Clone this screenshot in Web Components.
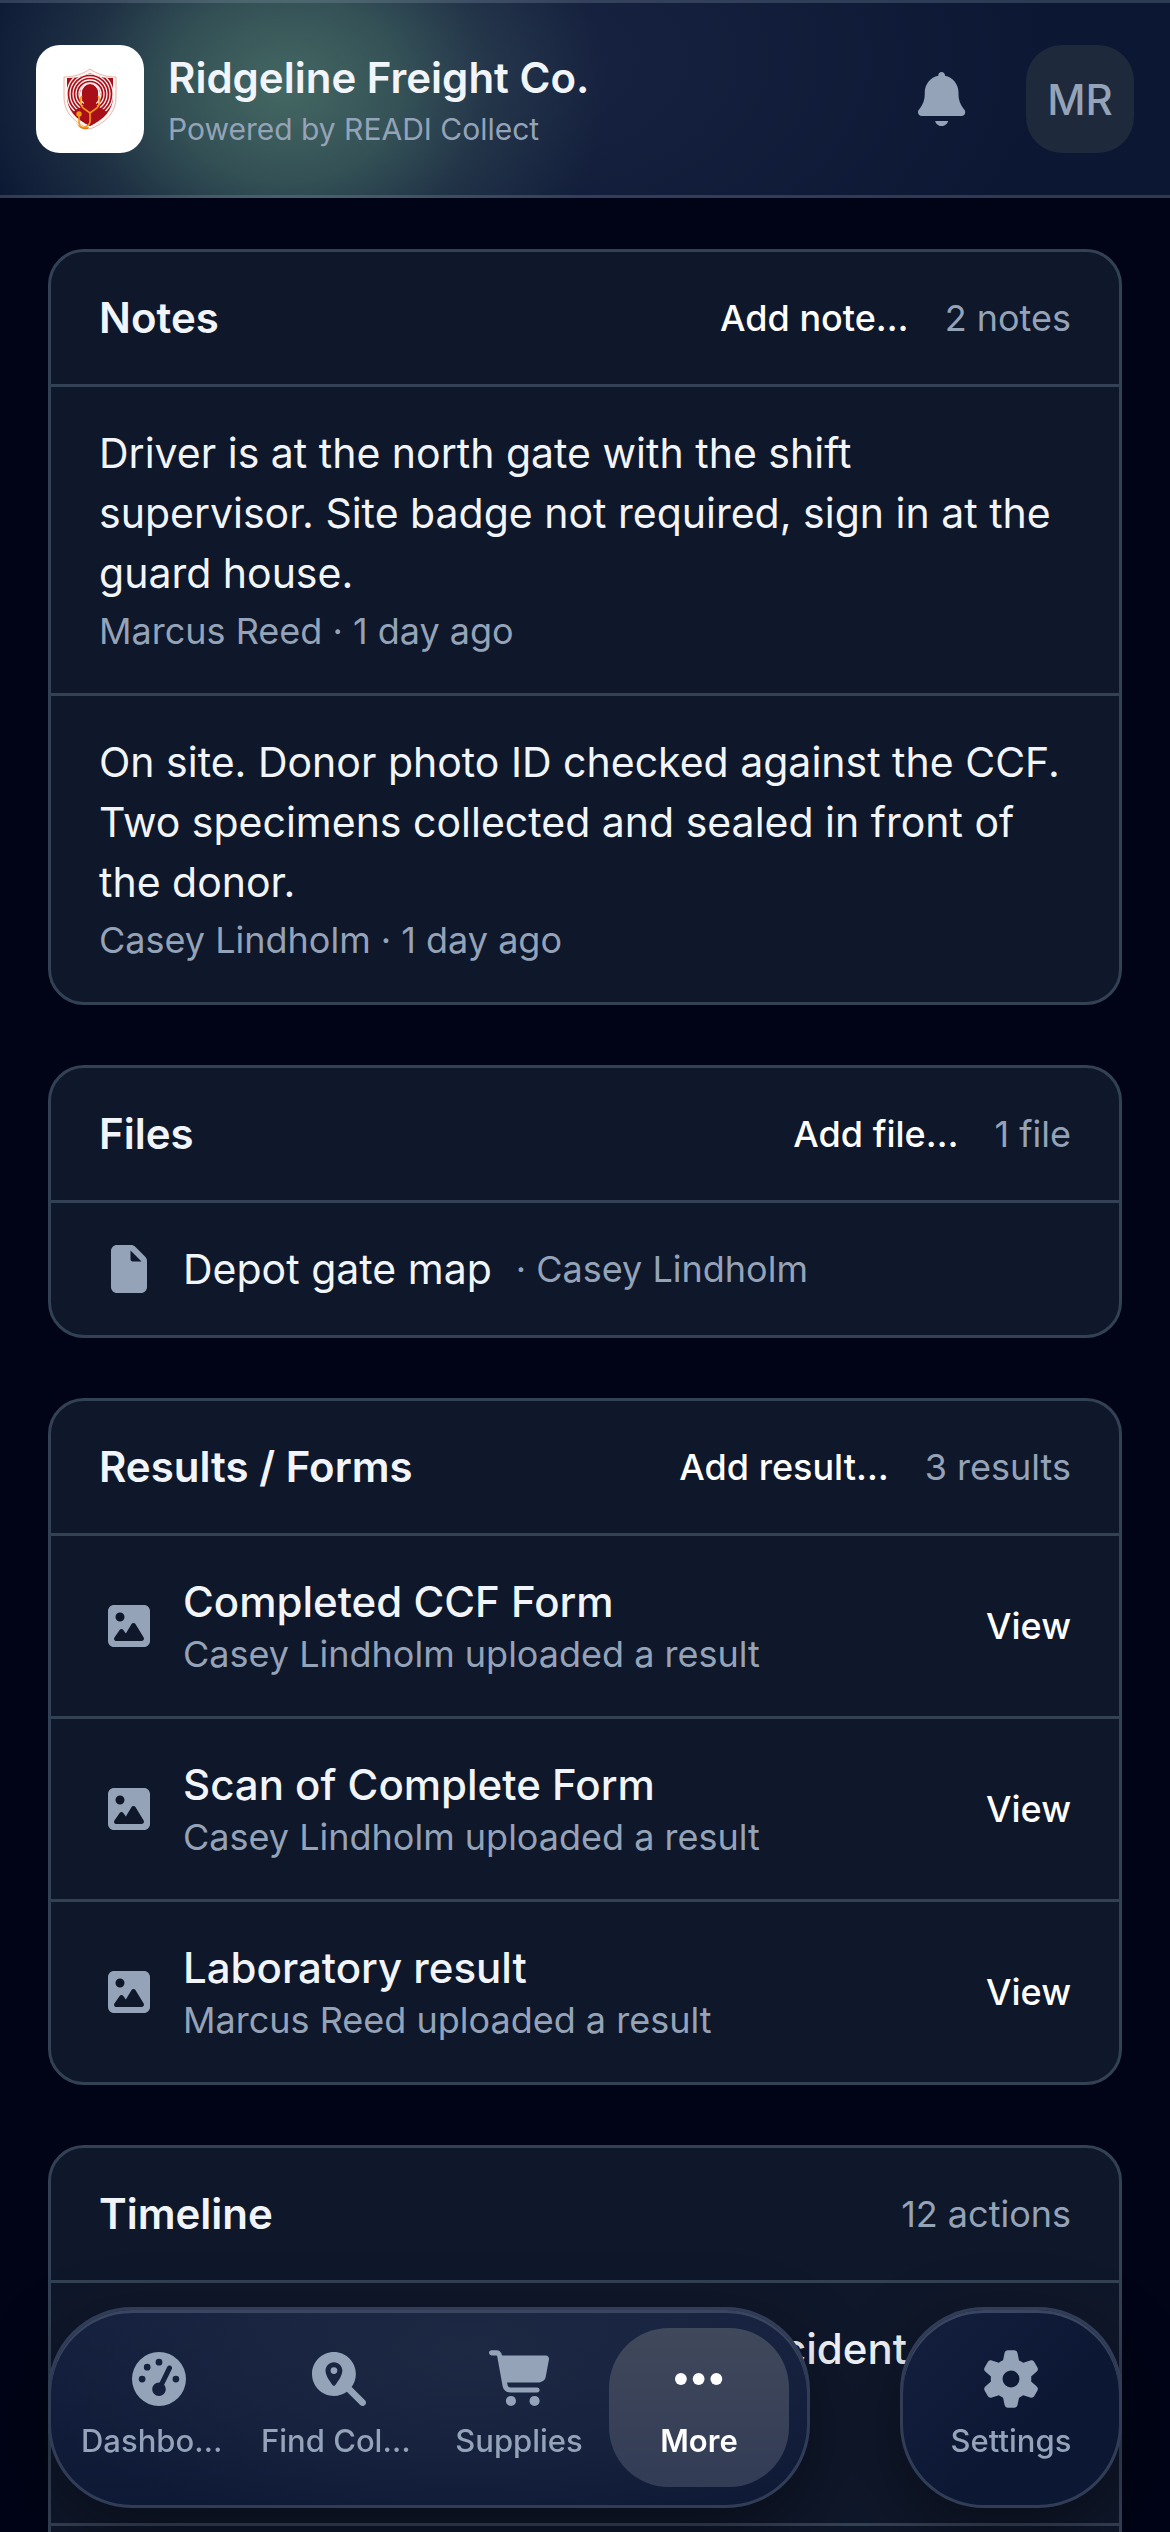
<!DOCTYPE html>
<html lang="en">
<head>
<meta charset="utf-8">
<meta name="viewport" content="width=device-width, initial-scale=1">
<title>Ridgeline Freight Co.</title>
<style>
  :root {
    --page: #010416;
    --card: #0f172a;
    --line: #334155;
    --text: #f1f5f9;
    --strong: #ffffff;
    --muted: #94a3b8;
    --chip: #1e293b;
    --size-title: 42px;
    --size-body: 41px;
    --size-meta: 36px;
    --size-label: 31px;
    --size-small: 30px;
  }
  body {
    margin: 0;
    background: var(--page);
    color: var(--text);
    font-family: Inter, "Liberation Sans", sans-serif;
  }
</style>
</head>
<body>
<app-shell>
  <app-header slot="header" name="Ridgeline Freight Co." tagline="Powered by READI Collect" initials="MR"></app-header>

  <list-card heading="Notes" action="Add note…" count="2 notes">
    <note-item meta="Marcus Reed · 1 day ago">Driver is at the north gate with the shift supervisor. Site badge not required, sign in at the guard house.</note-item>
    <note-item meta="Casey Lindholm · 1 day ago">On site. Donor photo ID checked against the CCF. Two specimens collected and sealed in front of the donor.</note-item>
  </list-card>

  <list-card heading="Files" action="Add file…" count="1 file">
    <file-item by="· Casey Lindholm">Depot gate map</file-item>
  </list-card>

  <list-card heading="Results / Forms" action="Add result…" count="3 results">
    <result-item meta="Casey Lindholm uploaded a result">Completed CCF Form</result-item>
    <result-item meta="Casey Lindholm uploaded a result">Scan of Complete Form</result-item>
    <result-item meta="Marcus Reed uploaded a result">Laboratory result</result-item>
  </list-card>

  <list-card heading="Timeline" count="12 actions">
    <timeline-item>Accident</timeline-item>
    <timeline-item></timeline-item>
  </list-card>

  <nav-dock slot="dock">
    <nav-pill>
      <nav-tab icon="gauge" label="Dashbo…" truncated></nav-tab>
      <nav-tab icon="find" label="Find Col…" truncated></nav-tab>
      <nav-tab icon="cart" label="Supplies"></nav-tab>
      <nav-tab icon="dots" label="More" active></nav-tab>
    </nav-pill>
    <nav-pill compact>
      <nav-tab icon="gear" label="Settings"></nav-tab>
    </nav-pill>
  </nav-dock>
</app-shell>

<script>
const ICONS = {
  bell: ['448', '<path d="M224 0c-17.7 0-32 14.3-32 32l0 3.2C119 50 64 114.6 64 192l0 21.7c0 48.1-16.4 94.8-46.4 132.4L7.8 358.3C2.7 364.6 0 372.4 0 380.5 0 400.1 15.9 416 35.5 416l376.9 0c19.6 0 35.5-15.9 35.5-35.5 0-8.1-2.7-15.9-7.8-22.2l-9.8-12.2C400.4 308.5 384 261.8 384 213.7l0-21.7c0-77.4-55-142-128-156.8l0-3.2c0-17.7-14.3-32-32-32zM162 464c7.1 27.6 32.2 48 62 48s54.9-20.4 62-48l-124 0z"/>'],
  file: ['384', '<path d="M0 64C0 28.7 28.7 0 64 0L213.5 0c17 0 33.3 6.7 45.3 18.7L365.3 125.3c12 12 18.7 28.3 18.7 45.3L384 448c0 35.3-28.7 64-64 64L64 512c-35.3 0-64-28.7-64-64L0 64zm208-5.5l0 93.5c0 13.3 10.7 24 24 24L325.5 176 208 58.5z"/>'],
  image: ['448', '<path d="M64 32C28.7 32 0 60.7 0 96L0 416c0 35.3 28.7 64 64 64l320 0c35.3 0 64-28.7 64-64l0-320c0-35.3-28.7-64-64-64L64 32zm64 80a48 48 0 1 1 0 96 48 48 0 1 1 0-96zM272 224c8.4 0 16.1 4.4 20.5 11.5l88 144c4.5 7.4 4.7 16.7 .5 24.3S368.7 416 360 416L88 416c-8.9 0-17.2-5-21.3-12.9s-3.5-17.5 1.6-24.8l56-80c4.5-6.4 11.8-10.2 19.7-10.2s15.2 3.8 19.7 10.2l26.4 37.8 61.4-100.5c4.4-7.1 12.1-11.5 20.5-11.5z"/>'],
  gauge: ['512', '<path fill-rule="evenodd" d="M0 256a256 256 0 1 1 512 0 256 256 0 1 1 -512 0zM320 352c0-16-6-31-15.500-42L377.800 161.600c5.800-11.900 .9-26.300-11-32.100s-26.300-.9-32.100 11L262 288.300c-2-.2-4-.3-6-.3-35.300 0-64 28.700-64 64s28.700 64 64 64 64-28.700 64-64zM144 176a32 32 0 1 0 0-64 32 32 0 1 0 0 64zM128 256a32 32 0 1 0 -64 0 32 32 0 1 0 64 0zM416 288a32 32 0 1 0 0-64 32 32 0 1 0 0 64zM288 96a32 32 0 1 0 -64 0 32 32 0 1 0 64 0z"/>'],
  find: ['512', '<path fill-rule="evenodd" d="M416 208c0 45.900-14.900 88.300-40 122.700L502.600 457.400c12.500 12.500 12.500 32.800 0 45.300s-32.800 12.500-45.300 0L330.700 376C296.300 401.100 253.900 416 208 416 93.100 416 0 322.900 0 208S93.100 0 208 0 416 93.100 416 208zM288 176c0-44.200-35.800-80-80-80s-80 35.800-80 80c0 48.800 46.500 111.600 68.600 138.600c6 7.300 16.800 7.300 22.700 0c22.100-27 68.600-89.800 68.600-138.600zM176 176a32 32 0 1 1 64 0 32 32 0 1 1 -64 0z"/>'],
  cart: ['576', '<path d="M24-16C10.700-16 0-5.300 0 8S10.700 32 24 32l45.300 0c3.900 0 7.200 2.800 7.900 6.600l52.100 286.300c6.200 34.200 36 59.100 70.800 59.100L456 384c13.300 0 24-10.700 24-24s-10.700-24-24-24l-255.900 0c-11.600 0-21.500-8.300-23.600-19.700l-5.100-28.300 303.600 0c30.800 0 57.200-21.900 62.900-52.200L568.900 69.900C572.600 50.200 557.500 32 537.400 32l-412.700 0-.4-2c-4.800-26.600-28-46-55.100-46L24-16zM208 512a48 48 0 1 0 0-96 48 48 0 1 0 0 96zm224 0a48 48 0 1 0 0-96 48 48 0 1 0 0 96z"/>'],
  dots: ['448', '<circle cx="56" cy="256" r="56"/><circle cx="224" cy="256" r="56"/><circle cx="392" cy="256" r="56"/>'],
  gear: ['512', '<path d="M195.100 9.500C198.100-5.300 211.200-16 226.400-16l59.800 0c15.200 0 28.300 10.700 31.300 25.500L332 79.500c14.100 6 27.300 13.700 39.300 22.800l67.800-22.500c14.400-4.800 30.200 1.200 37.800 14.400l29.900 51.800c7.600 13.200 4.900 29.800-6.500 39.900L447 233.300c.9 7.400 1.300 15 1.300 22.700s-.5 15.300-1.300 22.700l53.400 47.500c11.400 10.100 14 26.800 6.500 39.900l-29.900 51.800c-7.600 13.100-23.400 19.200-37.800 14.400l-67.800-22.500c-12.100 9.100-25.300 16.700-39.300 22.800l-14.400 69.900c-3.100 14.900-16.200 25.500-31.300 25.500l-59.800 0c-15.200 0-28.300-10.700-31.300-25.500l-14.400-69.900c-14.100-6-27.200-13.700-39.300-22.800L73.500 432.300c-14.400 4.800-30.200-1.200-37.800-14.400L5.800 366.100c-7.600-13.200-4.900-29.800 6.500-39.900l53.400-47.500c-.9-7.400-1.300-15-1.300-22.700s.5-15.300 1.300-22.700L12.300 185.800c-11.400-10.100-14-26.800-6.500-39.900L35.700 94.100c7.600-13.200 23.400-19.200 37.800-14.400l67.800 22.500c12.100-9.100 25.300-16.700 39.300-22.800L195.100 9.500zM256.300 336a80 80 0 1 0 -.6-160 80 80 0 1 0 .6 160z"/>']
};

const icon = (name) => {
  const [width, shape] = ICONS[name];
  return `<svg viewBox="0 0 ${width} 512" fill="currentColor" aria-hidden="true">${shape}</svg>`;
};

/* Base class: every element renders a string of markup into an open shadow root. */
class View extends HTMLElement {
  connectedCallback() {
    if (this.shadowRoot) return;
    this.attachShadow({ mode: 'open' }).innerHTML = this.view();
  }
  attr(name) { return this.getAttribute(name) || ''; }
}

customElements.define('app-shell', class extends View {
  view() {
    return `<style>
      :host { display: flex; flex-direction: column; height: 100vh; overflow: hidden; }
      main { flex: 1; min-height: 0; overflow: hidden; display: flex; flex-direction: column; gap: 60px; padding: 51px 48px 0; }
      ::slotted(list-card) { flex: none; }
    </style>
    <slot name="header"></slot><main><slot></slot></main><slot name="dock"></slot>`;
  }
});

customElements.define('brand-mark', class extends View {
  view() {
    return `<style>
      :host { display: flex; align-items: center; justify-content: center; width: 108px; height: 108px; border-radius: 24px; background: #fff; }
      svg { height: 62px; width: 54px; }
    </style>
    <svg viewBox="0 0 54 62" fill="none" role="img" aria-label="READI">
      <defs><clipPath id="in"><path d="M27 5C20 9 13 10 4 10v19c0 13 9 22 23 29 14-7 23-16 23-29V10c-9 0-16-1-23-5z"/></clipPath></defs>
      <path d="M27 1C20 6 11 9 1 9v20c0 16 11 26 26 32 15-6 26-16 26-32V9C43 9 34 6 27 1z" fill="#fff7f4" stroke="#e0a393" stroke-width=".8"/>
      <path d="M27 5C20 9 13 10 4 10v19c0 13 9 22 23 29 14-7 23-16 23-29V10c-9 0-16-1-23-5z" fill="#a90f18"/>
      <g clip-path="url(#in)" stroke="#fbeeee" stroke-width="1.300">
        <circle cx="27" cy="26" r="11"/><circle cx="27" cy="26" r="14"/><circle cx="27" cy="26" r="17"/><circle cx="27" cy="26" r="20"/><circle cx="27" cy="26" r="23"/>
        <path d="M18 36V25a9 9 0 0 1 18 0v11" stroke-width="2"/>
      </g>
      <path clip-path="url(#in)" d="M4 62c1-13 5-19 14-23l3-2v-2c-2-2-2-5-2-10a8 9 0 0 1 16 0c0 5 0 8-2 10v2l3 2c9 4 13 10 14 23z" fill="#a90f18"/>
      <path d="M19 28c-3 3-1 10 1 12l7 5 7-5c2-2 4-9 1-12M27 45c0 8 1 11-3 13-4 3-8 1-8-4v-7" stroke="#f59a13" stroke-width="1.600"/>
      <circle cx="16" cy="46" r="2.700" fill="#f59a13"/>
      <path d="M13 54c2 5 7 7 13 5l-1 2c-5 1-10-1-12-7z" fill="#e07a10"/>
    </svg>`;
  }
});

customElements.define('app-header', class extends View {
  view() {
    return `<style>
      :host {
        display: flex; align-items: center; gap: 24px; flex: none; box-sizing: border-box; padding: 42px 36px;
        border: solid rgba(148, 163, 184, .25); border-width: 3px 0;
        background-color: #0b1733;
        background-clip: border-box;
        background-image:
          radial-gradient(ellipse 320px 260px at 285px 88px, rgba(80, 122, 108, .8) 0%, rgba(72, 112, 102, .62) 36%, rgba(60, 90, 92, .34) 64%, rgba(40, 62, 80, 0) 100%),
          radial-gradient(ellipse 560px 320px at 500px 60px, rgba(30, 41, 72, .7), rgba(20, 32, 62, 0) 100%);
        background-origin: border-box;
      }
      .name { flex: 1; min-width: 0; display: flex; flex-direction: column; }
      h1 { margin: 0; font-size: var(--size-title); line-height: 60px; font-weight: 600; color: var(--text); }
      p { margin: 0; font-size: var(--size-small); line-height: 42px; color: var(--muted); }
      button { border: 0; padding: 0; font: inherit; color: var(--muted); width: 108px; height: 108px; display: flex; align-items: center; justify-content: center; }
      .bell { background: none; }
      .bell svg { height: 54px; }
      .user { background: var(--chip); border-radius: 36px; font-size: var(--size-title); font-weight: 500; }
      .tools { display: flex; gap: 30px; }
    </style>
    <brand-mark></brand-mark>
    <div class="name"><h1>${this.attr('name')}</h1><p>${this.attr('tagline')}</p></div>
    <div class="tools">
      <button class="bell" type="button" aria-label="Notifications">${icon('bell')}</button>
      <button class="user" type="button">${this.attr('initials')}</button>
    </div>`;
  }
});

customElements.define('list-card', class extends View {
  view() {
    const action = this.attr('action');
    return `<style>
      :host { display: block; border: 3px solid var(--line); border-radius: 36px; background: var(--card); overflow: hidden; }
      header { display: flex; align-items: center; gap: 36px; height: 132px; padding: 0 48px; }
      h2 { flex: 1; margin: 0; font-size: var(--size-title); line-height: 60px; font-weight: 600; color: var(--text); }
      button { border: 0; padding: 0; background: none; font: inherit; font-size: var(--size-meta); line-height: 48px; font-weight: 500; color: var(--strong); }
      span { font-size: var(--size-meta); line-height: 48px; color: var(--muted); }
      ::slotted(*) { border-top: 3px solid var(--line); }
    </style>
    <header><h2>${this.attr('heading')}</h2>${action ? `<button type="button">${action}</button>` : ''}<span>${this.attr('count')}</span></header>
    <slot></slot>`;
  }
});

customElements.define('note-item', class extends View {
  view() {
    return `<style>
      :host { display: block; padding: 36px 48px 33px; }
      p { margin: 0; font-size: var(--size-body); line-height: 60px; }
      small { display: block; font-size: var(--size-meta); line-height: 57px; color: var(--muted); }
    </style>
    <p><slot></slot></p><small>${this.attr('meta')}</small>`;
  }
});

customElements.define('file-item', class extends View {
  view() {
    return `<style>
      :host { display: flex; align-items: center; gap: 24px; padding: 36px 48px; font-size: var(--size-body); line-height: 60px; }
      i { display: flex; justify-content: center; width: 60px; color: var(--muted); }
      svg { height: 48px; }
      a { color: inherit; text-decoration: none; }
      small { font-size: var(--size-meta); color: var(--muted); }
    </style>
    <i>${icon('file')}</i><a href="#"><slot></slot></a><small>${this.attr('by')}</small>`;
  }
});

customElements.define('result-item', class extends View {
  view() {
    return `<style>
      :host { display: flex; align-items: center; gap: 24px; padding: 36px 48px; }
      i { display: flex; justify-content: center; width: 60px; color: var(--muted); }
      svg { height: 48px; }
      div { flex: 1; padding-bottom: 3px; }
      p { margin: 0; font-size: var(--size-title); line-height: 60px; font-weight: 500; }
      small { display: block; font-size: var(--size-meta); line-height: 45px; color: var(--muted); }
      a { font-size: var(--size-meta); line-height: 48px; font-weight: 500; color: var(--strong); text-decoration: none; }
    </style>
    <i>${icon('image')}</i><div><p><slot></slot></p><small>${this.attr('meta')}</small></div><a href="#">View</a>`;
  }
});

customElements.define('timeline-item', class extends View {
  view() {
    return `<style>
      :host { display: flex; justify-content: flex-end; min-height: 168px; padding: 36px 212px 36px 48px; }
      p { margin: 0; font-size: var(--size-title); line-height: 60px; font-weight: 500; }
    </style>
    <p><slot></slot></p>`;
  }
});

customElements.define('nav-dock', class extends View {
  view() {
    return `<style>
      :host { position: fixed; left: 48px; right: 48px; bottom: 24px; display: flex; justify-content: space-between; }
    </style>
    <slot></slot>`;
  }
});

customElements.define('nav-pill', class extends View {
  view() {
    return `<style>
      :host {
        display: flex; padding: 18px; border: 3px solid #313d57; border-radius: 84px;
        background: radial-gradient(ellipse 60% 100% at 55% 20%, #1d2943, rgba(27, 39, 66, 0)), linear-gradient(#15203f, #0e1936);
        box-shadow: inset 0 3px 0 #3a4660, 0 24px 72px rgba(0, 0, 0, .4);
      }
      :host([compact]) { background: linear-gradient(135deg, #15203f, #0b1733 60%); }
    </style>
    <slot></slot>`;
  }
});

customElements.define('nav-tab', class extends View {
  view() {
    return `<style>
      :host { display: block; }
      a {
        display: flex; flex-direction: column; align-items: center; gap: 12px; box-sizing: border-box;
        width: 180px; height: 159px; padding: 24px 12px 0; border-radius: 60px; color: var(--muted); text-decoration: none;
      }
      :host([active]) a { color: var(--strong); background: linear-gradient(#40485b, #323c55); }
      svg { height: 54px; overflow: visible; }
      span { font-size: var(--size-label); line-height: 45px; font-weight: 500; white-space: nowrap; }
      :host([truncated]) span { align-self: stretch; }
      :host([active]) span { font-weight: 600; }
    </style>
    <a href="#">${icon(this.attr('icon'))}<span>${this.attr('label')}</span></a>`;
  }
});
</script>
</body>
</html>
